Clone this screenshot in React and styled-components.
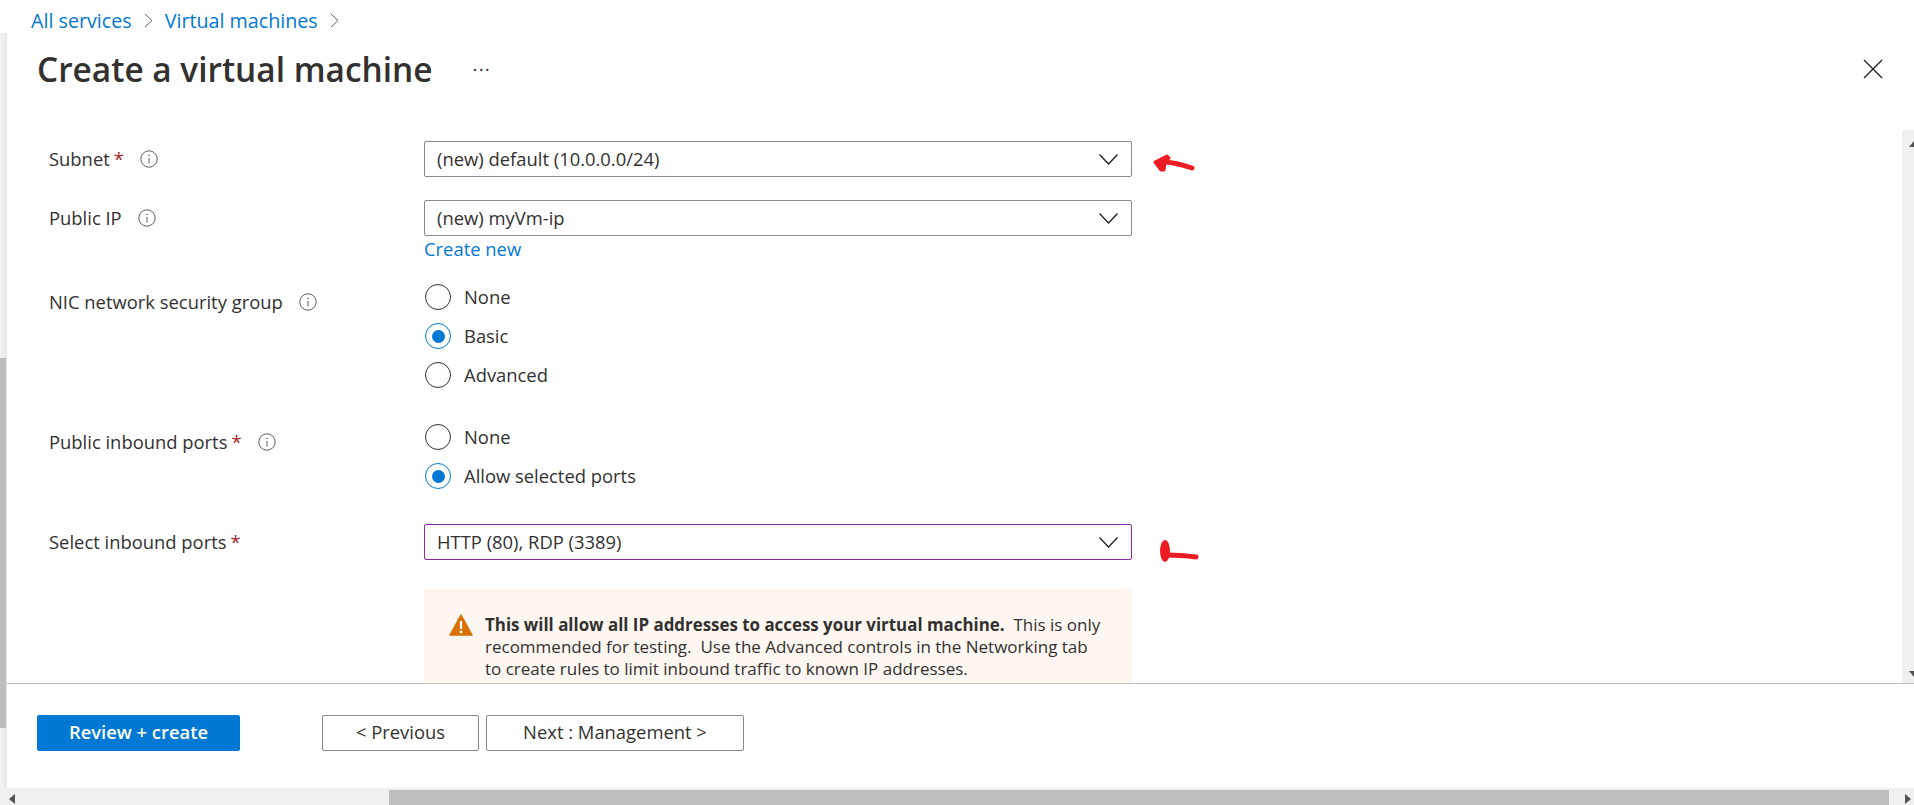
import styled, { createGlobalStyle } from 'styled-components';

const GlobalStyle = createGlobalStyle`
    html, body {
        margin: 0;
        padding: 0;
        background: #fff;
    }
    * {
        box-sizing: border-box;
    }
`;

const FONT = '"Open Sans", "Noto Sans", "Liberation Sans", sans-serif';

const Page = styled.div`
    width: 1914px;
    height: 805px;
    overflow: hidden;
    display: flex;
    flex-direction: column;
    font-family: ${FONT};
    font-size: 18.4px;
    color: #323130;
    background: #fff;
`;

const Breadcrumb = styled.nav`
    height: 33px;
    flex: none;
    display: flex;
    align-items: center;
    gap: 12px;
    padding: 8px 0 0 31px;
    font-size: 19.7px;
    a {
        color: #0078d4;
    }
`;

const Workspace = styled.div`
    flex: 1;
    min-height: 0;
    display: flex;
`;

const LeftRail = styled.div`
    width: 7px;
    flex: none;
    display: flex;
    flex-direction: column;
    background: linear-gradient(90deg, #f4f4f4, #e6e6e6);
`;

const RailThumb = styled.div`
    width: 6px;
    height: 370px;
    margin-top: 325px;
    background: #bdbdbd;
`;

const Blade = styled.main`
    flex: 1;
    min-width: 0;
    display: flex;
    flex-direction: column;
`;

const BladeHeader = styled.header`
    height: 97px;
    flex: none;
    display: flex;
    align-items: flex-start;
    padding: 14px 31px 0 30px;
`;

const Title = styled.h1`
    margin: 0;
    font-size: 33.4px;
    line-height: 44px;
    font-weight: 600;
    color: #323130;
`;

const MoreDots = styled.span`
    margin: 0 0 0 40px;
    font-size: 19px;
    line-height: 34px;
    letter-spacing: 1.2px;
`;

const CloseButton = styled.button`
    margin: 12px 0 0 auto;
    padding: 0;
    border: 0;
    background: none;
    width: 20px;
    height: 20px;
    display: block;
`;

const FormArea = styled.div`
    flex: 1;
    min-height: 0;
    display: flex;
`;

const FormContent = styled.div`
    flex: 1;
    min-width: 0;
    overflow: hidden;
    padding: 11px 0 0 42px;
`;

const Row = styled.div`
    position: relative;
    display: grid;
    grid-template-columns: 375px 708px;
    margin-bottom: ${(props) => props.$after || 23}px;
`;

const Label = styled.label`
    display: flex;
    align-items: center;
    height: 36px;
    padding-bottom: 2px;
`;

const Required = styled.span`
    color: #a4262c;
    margin-left: 4px;
`;

const InfoIcon = styled.svg`
    width: 18px;
    height: 18px;
    margin: 2px 0 0 16px;
    flex: none;
`;

const Select = styled.div`
    height: 36px;
    display: flex;
    align-items: center;
    justify-content: space-between;
    padding: 0 13px 2px 12px;
    border: 1px solid ${(props) => (props.$focused ? '#8a2da5' : '#8a8886')};
    border-radius: 2px;
    svg {
        margin-top: 2px;
    }
`;

const CreateNew = styled.a`
    display: block;
    margin-top: 1px;
    height: 24px;
    line-height: 23px;
    color: #0078d4;
`;

const RadioGroup = styled.div`
    display: flex;
    flex-direction: column;
    gap: 13px;
`;

const RadioRow = styled.div`
    display: flex;
    align-items: center;
    height: 26px;
    gap: 13px;
    span + span {
        padding-bottom: 2px;
    }
`;

const RadioCircle = styled.span`
    width: 26px;
    height: 26px;
    margin-left: 1px;
    border-radius: 50%;
    border: 1px solid ${(props) => (props.$checked ? '#0078d4' : '#323130')};
    display: flex;
    align-items: center;
    justify-content: center;
    &::after {
        content: '';
        display: ${(props) => (props.$checked ? 'block' : 'none')};
        width: 13px;
        height: 13px;
        border-radius: 50%;
        background: #0078d4;
    }
`;

// hand drawn annotation lying over the form
const ArrowMark = styled.svg`
    position: absolute;
    left: ${(props) => props.$left}px;
    top: ${(props) => props.$top}px;
`;

const WarningBox = styled.div`
    margin-left: 375px;
    width: 708px;
    height: 110px;
    background: #fef7f1;
    display: flex;
    gap: 12px;
    padding: 25px 0 0 25px;
`;

const WarningIcon = styled.svg`
    width: 24px;
    height: 22px;
    flex: none;
`;

const WarningText = styled.p`
    margin: 0;
    font-size: 17px;
    line-height: 22px;
    white-space: pre-wrap;
    b {
        font-size: 16.9px;
        font-weight: 700;
    }
`;

const VScrollbar = styled.div`
    width: 12px;
    flex: none;
    background: #f0f0f0;
    display: flex;
    flex-direction: column;
    justify-content: space-between;
    padding: 11px 0 6px 7px;
    overflow: hidden;
`;

const BladeFooter = styled.footer`
    height: 105px;
    flex: none;
    border-top: 1px solid #bdbdbd;
    display: flex;
    align-items: flex-start;
    padding: 31px 0 0 30px;
`;

const Button = styled.button`
    height: 36px;
    width: ${(props) => props.$width}px;
    margin-left: ${(props) => props.$left || 0}px;
    border-radius: 2px;
    border: 1px solid ${(props) => (props.$primary ? '#0078d4' : '#8a8886')};
    background: ${(props) => (props.$primary ? '#0078d4' : '#fff')};
    color: ${(props) => (props.$primary ? '#fff' : '#323130')};
    font-family: ${FONT};
    font-size: 18.4px;
    font-weight: ${(props) => (props.$primary ? 600 : 400)};
    padding: 0 0 3px;
`;

const HScrollbar = styled.div`
    height: 17px;
    flex: none;
    background: #f0f0f0;
    display: flex;
    align-items: flex-end;
`;

const HThumb = styled.div`
    height: 15px;
    width: 1500px;
    margin-left: 374px;
    background: #bdbdbd;
`;

const ScrollArrow = styled.svg`
    display: block;
    flex: none;
    margin-left: ${(props) => props.$left || 0}px;
    margin-bottom: ${(props) => props.$bottom || 0}px;
`;

function Info() {
    return (
        <InfoIcon viewBox="0 0 18 18">
            <circle cx="9" cy="9" r="8.2" fill="none" stroke="#605e5c" strokeWidth="1" />
            <path d="M9 8v5.5" stroke="#605e5c" strokeWidth="1" />
            <circle cx="9" cy="5.5" r="0.8" fill="#605e5c" />
        </InfoIcon>
    );
}

function Chevron() {
    return (
        <svg width="19" height="11" viewBox="0 0 19 11">
            <path d="M0.5 0.5 L9.5 10 L18.5 0.5" fill="none" stroke="#201f1e" strokeWidth="1.3" />
        </svg>
    );
}

function Crumb() {
    return (
        <svg width="9" height="15" viewBox="0 0 9 15">
            <path d="M1 1l7 6.5L1 14" fill="none" stroke="#605e5c" />
        </svg>
    );
}

function Radio({ checked, children }) {
    return (
        <RadioRow>
            <RadioCircle $checked={checked} />
            <span>{children}</span>
        </RadioRow>
    );
}

export default function App() {
    return (
        <Page>
            <GlobalStyle />
            <Breadcrumb>
                <a>All services</a>
                <Crumb />
                <a>Virtual machines</a>
                <Crumb />
            </Breadcrumb>
            <Workspace>
                <LeftRail>
                    <RailThumb />
                </LeftRail>
                <Blade>
                    <BladeHeader>
                        <Title>Create a virtual machine</Title>
                        <MoreDots>...</MoreDots>
                        <CloseButton aria-label="Close">
                            <svg width="20" height="20" viewBox="0 0 20 20">
                                <path d="M1 1l18 18M19 1L1 19" stroke="#201f1e" strokeWidth="1.3" />
                            </svg>
                        </CloseButton>
                    </BladeHeader>
                    <FormArea>
                        <FormContent>
                            <Row>
                                <Label>
                                    Subnet<Required>*</Required>
                                    <Info />
                                </Label>
                                <Select>
                                    (new) default (10.0.0.0/24)
                                    <Chevron />
                                </Select>
                                <ArrowMark $left={1104} $top={12} width="44" height="20" viewBox="0 0 44 20">
                                    <path d="M2 9 L14 3 L16 5 L12 10 L11 17 L8 17 Z" fill="#ed1c24" stroke="#ed1c24" strokeWidth="3" strokeLinejoin="round" />
                                    <path d="M10 9 C20 9 30 12 39 15" fill="none" stroke="#ed1c24" strokeWidth="5" strokeLinecap="round" />
                                </ArrowMark>
                            </Row>
                            <Row>
                                <Label>
                                    Public IP
                                    <Info />
                                </Label>
                                <div>
                                    <Select>
                                        (new) myVm-ip
                                        <Chevron />
                                    </Select>
                                    <CreateNew>Create new</CreateNew>
                                </div>
                            </Row>
                            <Row $after={36}>
                                <Label>
                                    NIC network security group
                                    <Info />
                                </Label>
                                <RadioGroup>
                                    <Radio>None</Radio>
                                    <Radio checked>Basic</Radio>
                                    <Radio>Advanced</Radio>
                                </RadioGroup>
                            </Row>
                            <Row $after={35}>
                                <Label>
                                    Public inbound ports<Required>*</Required>
                                    <Info />
                                </Label>
                                <RadioGroup>
                                    <Radio>None</Radio>
                                    <Radio checked>Allow selected ports</Radio>
                                </RadioGroup>
                            </Row>
                            <Row $after={29}>
                                <Label>
                                    Select inbound ports<Required>*</Required>
                                </Label>
                                <Select $focused>
                                    HTTP (80), RDP (3389)
                                    <Chevron />
                                </Select>
                                <ArrowMark $left={1109} $top={14} width="44" height="28" viewBox="0 0 44 28">
                                    <ellipse cx="7" cy="13" rx="5" ry="11" fill="#ed1c24" />
                                    <path d="M9 17 C20 17 30 18 38 19" fill="none" stroke="#ed1c24" strokeWidth="5" strokeLinecap="round" />
                                </ArrowMark>
                            </Row>
                            <WarningBox>
                                <WarningIcon viewBox="0 0 24 22">
                                    <path d="M12 1 L23 21 H1 Z" fill="#da7000" stroke="#da7000" strokeWidth="1.5" strokeLinejoin="round" />
                                    <path d="M12 7v8" stroke="#fff" strokeWidth="2.2" />
                                    <circle cx="12" cy="18" r="1.4" fill="#fff" />
                                </WarningIcon>
                                <WarningText>
                                    <b>This will allow all IP addresses to access your virtual machine.</b>
                                    {'  This is only\nrecommended for testing.  Use the Advanced controls in the Networking tab\nto create rules to limit inbound traffic to known IP addresses.'}
                                </WarningText>
                            </WarningBox>
                        </FormContent>
                        <VScrollbar>
                            <ScrollArrow width="10" height="6" viewBox="0 0 10 6">
                                <path d="M5 0 L10 6 H0 Z" fill="#505050" />
                            </ScrollArrow>
                            <ScrollArrow width="10" height="6" viewBox="0 0 10 6">
                                <path d="M0 0 H10 L5 6 Z" fill="#505050" />
                            </ScrollArrow>
                        </VScrollbar>
                    </FormArea>
                    <BladeFooter>
                        <Button $primary $width={203}>Review + create</Button>
                        <Button $left={82} $width={157}>&lt; Previous</Button>
                        <Button $left={7} $width={258}>Next : Management &gt;</Button>
                    </BladeFooter>
                </Blade>
            </Workspace>
            <HScrollbar>
                <ScrollArrow $left={9} $bottom={1} width="6" height="10" viewBox="0 0 6 10">
                    <path d="M6 0 V10 L0 5 Z" fill="#505050" />
                </ScrollArrow>
                <HThumb />
                <ScrollArrow $left={16} $bottom={1} width="6" height="10" viewBox="0 0 6 10">
                    <path d="M0 0 L6 5 L0 10 Z" fill="#505050" />
                </ScrollArrow>
            </HScrollbar>
        </Page>
    );
}
